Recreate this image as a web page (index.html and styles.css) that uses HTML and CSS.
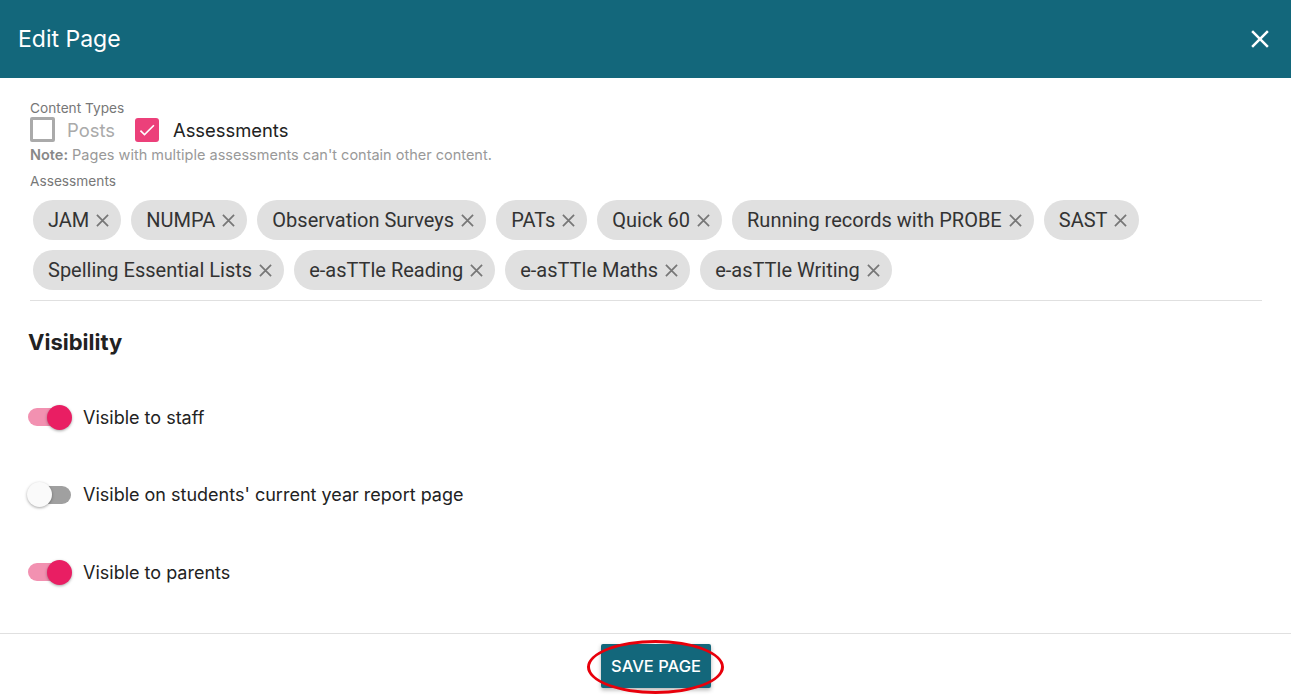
FILE: index.html
```html
<!DOCTYPE html>
<html>
<head>
  <title>Edit Page</title>
  <link rel="stylesheet" href="styles.css">
</head>
<body>
  <header class="dialog_header">
    <h1>Edit Page</h1>
    <button class="close_button" aria-label="Close">
      <svg viewBox="0 0 24 24" width="30" height="30"><path d="M19 6.41 17.59 5 12 10.59 6.41 5 5 6.41 10.59 12 5 17.59 6.41 19 12 13.41 17.59 19 19 17.59 13.41 12z"/></svg>
    </button>
  </header>

  <main class="dialog_body">
    <section id="content_types">
      <div class="field_label">Content Types</div>
      <div class="checkbox_row">
        <label class="checkbox disabled"><span class="box"></span>Posts</label>
        <label class="checkbox checked"><span class="box"><svg viewBox="0 0 24 24"><path d="M9 16.17 4.83 12l-1.42 1.41L9 19 21 7l-1.41-1.41z"/></svg></span>Assessments</label>
      </div>
      <div class="note"><strong>Note:</strong> Pages with multiple assessments can't contain other content.</div>
      <div class="field_label assessments_label">Assessments</div>
      <ul class="chips">
        <li>JAM<svg viewBox="0 0 14 14"><path d="M1 1 13 13M13 1 1 13"/></svg></li>
        <li>NUMPA<svg viewBox="0 0 14 14"><path d="M1 1 13 13M13 1 1 13"/></svg></li>
        <li>Observation Surveys<svg viewBox="0 0 14 14"><path d="M1 1 13 13M13 1 1 13"/></svg></li>
        <li>PATs<svg viewBox="0 0 14 14"><path d="M1 1 13 13M13 1 1 13"/></svg></li>
        <li>Quick 60<svg viewBox="0 0 14 14"><path d="M1 1 13 13M13 1 1 13"/></svg></li>
        <li>Running records with PROBE<svg viewBox="0 0 14 14"><path d="M1 1 13 13M13 1 1 13"/></svg></li>
        <li>SAST<svg viewBox="0 0 14 14"><path d="M1 1 13 13M13 1 1 13"/></svg></li>
        <li>Spelling Essential Lists<svg viewBox="0 0 14 14"><path d="M1 1 13 13M13 1 1 13"/></svg></li>
        <li>e-asTTle Reading<svg viewBox="0 0 14 14"><path d="M1 1 13 13M13 1 1 13"/></svg></li>
        <li>e-asTTle Maths<svg viewBox="0 0 14 14"><path d="M1 1 13 13M13 1 1 13"/></svg></li>
        <li>e-asTTle Writing<svg viewBox="0 0 14 14"><path d="M1 1 13 13M13 1 1 13"/></svg></li>
      </ul>
    </section>

    <section id="visibility">
      <h2>Visibility</h2>
      <ul class="toggles">
        <li><span class="switch on"><span class="knob"></span></span>Visible to staff</li>
        <li><span class="switch"><span class="knob"></span></span>Visible on students' current year report page</li>
        <li><span class="switch on"><span class="knob"></span></span>Visible to parents</li>
      </ul>
    </section>
  </main>

  <footer class="dialog_footer">
    <button class="save_button">Save Page</button>
    <span class="highlight_ring"></span>
  </footer>
</body>
</html>
```

FILE: styles.css
```css
* {
  box-sizing: border-box;
}

body {
  margin: 0;
  font-family: Inter, "Noto Sans", sans-serif;
  color: #222;
  background: #fff;
  height: 696px;
  display: flex;
  flex-direction: column;
  overflow: hidden;
}

.dialog_header {
  background-color: #13677b;
  height: 78px;
  display: flex;
  align-items: center;
  justify-content: space-between;
  padding: 0 18px;
  flex-shrink: 0;
}

.dialog_header h1 {
  margin: 0;
  color: #fff;
  font-size: 23px;
  font-weight: 400;
}

.close_button {
  background: none;
  border: 0;
  padding: 0;
  width: 30px;
  height: 30px;
  margin-right: -2px;
}

.close_button svg {
  fill: #fff;
  display: block;
}

.dialog_body {
  flex: 1;
  padding: 22px 29px 0 30px;
}

.field_label {
  font-size: 13.7px;
  line-height: 16px;
  color: #777;
}

.checkbox_row {
  display: flex;
  margin-top: 1px;
  height: 25px;
  gap: 20px;
}

.checkbox {
  display: flex;
  align-items: center;
  font-size: 18.4px;
  gap: 12px;
  color: #222;
}

.checkbox .box {
  width: 25px;
  height: 25px;
  border: 3px solid #aaa;
  border-radius: 2px;
  display: flex;
  align-items: center;
  justify-content: center;
}

.checkbox.disabled {
  color: #aaa;
}

.checkbox.checked {
  gap: 14px;
}

.checkbox.checked .box {
  width: 24px;
  height: 24px;
  background-color: #ec407a;
  border: 0;
  border-radius: 3px;
}

.checkbox.checked svg {
  width: 20px;
  height: 20px;
  fill: #fff;
}

.note {
  margin-top: 5px;
  font-size: 14.5px;
  line-height: 16px;
  color: #999;
}

.note strong {
  font-weight: 600;
  color: #888;
}

.assessments_label {
  margin-top: 10px;
}

.chips {
  list-style: none;
  margin: 11px 0 0;
  padding: 0 0 10px 3px;
  display: flex;
  flex-wrap: wrap;
  gap: 10px 10px;
  border-bottom: 1px solid #e0e0e0;
}

.chips li {
  height: 40px;
  border-radius: 20px;
  background-color: #e0e0e0;
  display: flex;
  align-items: center;
  padding: 0 12px 0 15px;
  font-family: Roboto, sans-serif;
  font-size: 20px;
  color: #333;
  gap: 7px;
}

.chips svg {
  width: 13px;
  height: 13px;
  stroke: #777;
  stroke-width: 1.9;
  fill: none;
}

#visibility h2 {
  margin: 27px 0 0 -2px;
  font-size: 22px;
  line-height: 28px;
  font-weight: 700;
  color: #222;
}

.toggles {
  list-style: none;
  margin: 46px 0 0 -2px;
  padding: 0;
  display: flex;
  flex-direction: column;
  gap: 47.5px;
}

.toggles li {
  display: flex;
  align-items: center;
  height: 30px;
  font-size: 18px;
  color: #222;
  gap: 12px;
}

.switch {
  width: 43px;
  height: 18px;
  border-radius: 9px;
  background-color: #a0a0a0;
  position: relative;
  flex-shrink: 0;
}

.switch .knob {
  position: absolute;
  top: -3.5px;
  left: -1px;
  width: 25px;
  height: 25px;
  border-radius: 50%;
  background-color: #fafafa;
  box-shadow: 0 1px 3px rgba(0, 0, 0, 0.35);
}

.switch.on {
  background-color: #f291b1;
}

.switch.on .knob {
  left: 19px;
  background-color: #e91e63;
}

.dialog_footer {
  height: 63px;
  border-top: 1px solid #e0e0e0;
  display: flex;
  justify-content: center;
  align-items: flex-start;
  padding-top: 10px;
  position: relative;
  flex-shrink: 0;
}

.save_button {
  background-color: #13677b;
  color: #fff;
  border: 0;
  border-radius: 2px;
  width: 110px;
  height: 44px;
  margin-left: 21px;
  font-family: Inter, sans-serif;
  font-size: 16.5px;
  font-weight: 500;
  text-transform: uppercase;
  box-shadow: 0 2px 4px rgba(0, 0, 0, 0.3);
  padding: 0;
}

.highlight_ring {
  position: absolute;
  top: 6px;
  left: 50%;
  margin-left: -59px;
  width: 137px;
  height: 54px;
  border: 3px solid #e8000b;
  border-radius: 50%;
}
```
